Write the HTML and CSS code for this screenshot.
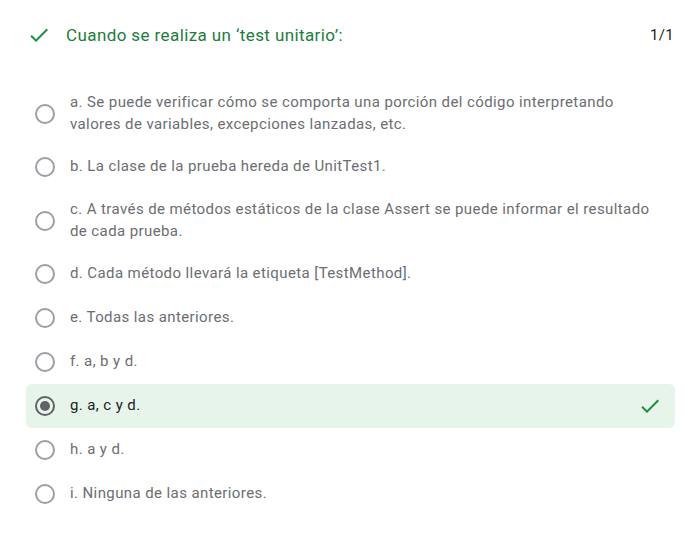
FILE: index.html
```html
<!DOCTYPE html>
<html lang="es">
<head>
<meta charset="utf-8">
<title>Pregunta</title>
<link rel="stylesheet" href="styles.css">
</head>
<body>
<div class="card">
  <div class="header">
    <svg class="check" viewBox="0 0 24 24" width="24" height="24"><path d="M9 16.17L4.83 12l-1.42 1.41L9 19 21 7l-1.41-1.41z"/></svg>
    <span class="title">Cuando se realiza un ‘test unitario’:</span>
    <span class="score">1/1</span>
  </div>
  <div class="options">
    <div class="option"><span class="radio"></span><span class="label">a. Se puede verificar cómo se comporta una porción del código interpretando valores de variables, excepciones lanzadas, etc.</span></div>
    <div class="option"><span class="radio"></span><span class="label">b. La clase de la prueba hereda de UnitTest1.</span></div>
    <div class="option"><span class="radio"></span><span class="label">c. A través de métodos estáticos de la clase Assert se puede informar el resultado de cada prueba.</span></div>
    <div class="option"><span class="radio"></span><span class="label">d. Cada método llevará la etiqueta [TestMethod].</span></div>
    <div class="option"><span class="radio"></span><span class="label">e. Todas las anteriores.</span></div>
    <div class="option"><span class="radio"></span><span class="label">f. a, b y d.</span></div>
    <div class="option correct"><span class="radio selected"></span><span class="label">g. a, c y d.</span>
      <svg class="check mark" viewBox="0 0 24 24" width="24" height="24"><path d="M9 16.17L4.83 12l-1.42 1.41L9 19 21 7l-1.41-1.41z"/></svg>
    </div>
    <div class="option"><span class="radio"></span><span class="label">h. a y d.</span></div>
    <div class="option"><span class="radio"></span><span class="label">i. Ninguna de las anteriores.</span></div>
  </div>
</div>
</body>
</html>
```
FILE: styles.css
```css
html, body {
  margin: 0;
  padding: 0;
  background: #ffffff;
}

body {
  font-family: Roboto, "Liberation Sans", Arial, sans-serif;
}

.card {
  padding: 0 18px 0 26px;
}

.header {
  display: flex;
  align-items: center;
  height: 44px;
  margin-top: 13px;
  padding: 0 1px 0 1px;
}

.check {
  flex: none;
  fill: #1e8e3e;
}

.title {
  flex: 1;
  margin-left: 15px;
  font-size: 17px;
  color: #188038;
  letter-spacing: 0.4px;
}

.score {
  font-size: 15px;
  color: #202124;
  letter-spacing: 0.3px;
}

.options {
  margin-top: 25px;
}

.option {
  display: flex;
  align-items: center;
  min-height: 44px;
  box-sizing: border-box;
  padding: 10px 13px 10px 9px;
  border-radius: 6px;
}

.radio {
  flex: none;
  box-sizing: border-box;
  width: 20px;
  height: 20px;
  border: 2px solid #9aa0a6;
  border-radius: 50%;
  margin-right: 15px;
  display: flex;
  align-items: center;
  justify-content: center;
}

.radio.selected {
  border-color: #5f6368;
}

.radio.selected::after {
  content: "";
  width: 10px;
  height: 10px;
  border-radius: 50%;
  background: #5f6368;
}

.label {
  flex: 1;
  font-size: 15px;
  line-height: 21.5px;
  color: #6b6e72;
  letter-spacing: 0.4px;
}

.option.correct {
  background: #e6f4ea;
}

.option.correct .label {
  color: #202124;
}

.mark {
  margin-left: 8px;
}
```
